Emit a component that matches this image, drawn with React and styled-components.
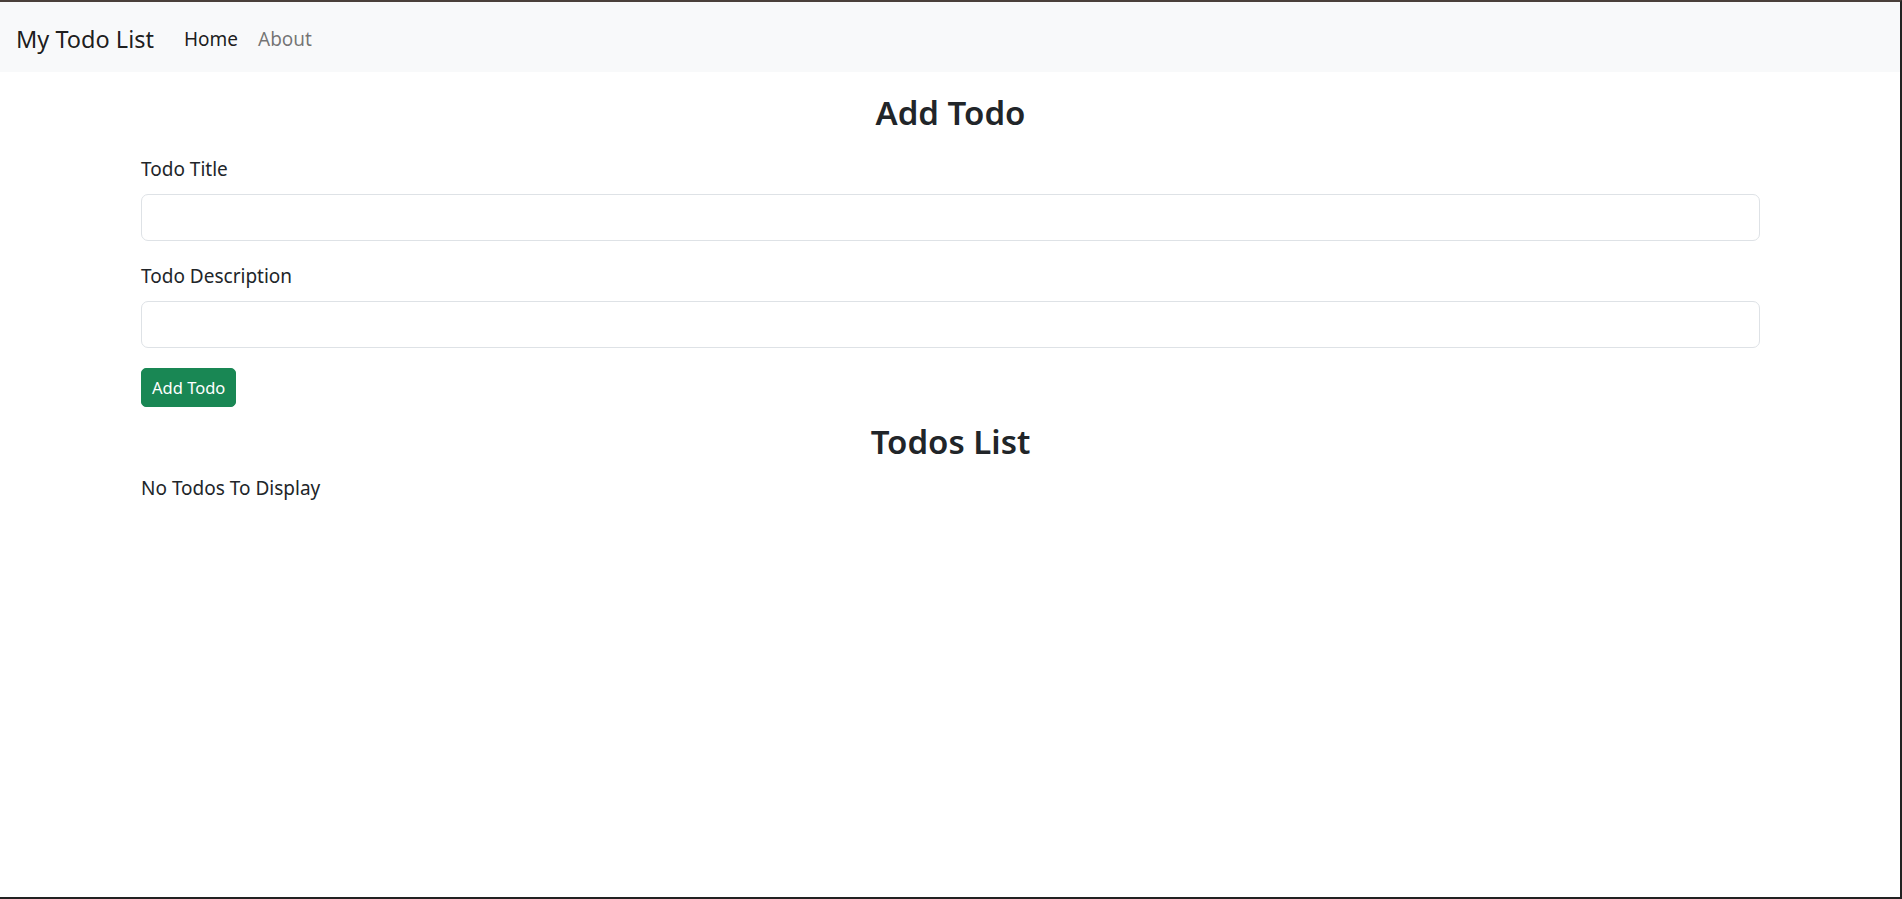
import React from "react";
import styled, { createGlobalStyle } from "styled-components";

const GlobalStyle = createGlobalStyle`
  * {
    box-sizing: border-box;
  }
  body {
    margin: 0;
    font-family: "Noto Sans", "Open Sans", sans-serif;
    font-size: 19px;
    line-height: 30px;
    color: #212529;
    background: #fff;
  }
`;

const Frame = styled.div`
  height: 899px;
  border-top: 2px solid #4a403a;
  border-right: 2px solid #222;
  border-bottom: 2px solid #222;
  overflow: hidden;
`;

const Navbar = styled.nav`
  height: 70px;
  background: #f8f9fa;
  display: flex;
  align-items: center;
  padding: 4px 15px 0 16px;
`;

const Brand = styled.a`
  font-size: 23.5px;
  color: rgba(0, 0, 0, 0.9);
  margin-right: 20px;
  text-decoration: none;
`;

const NavLink = styled.a`
  padding: 0 10px;
  font-size: 19px;
  color: ${(p) => (p.$active ? "rgba(0, 0, 0, 0.9)" : "rgba(0, 0, 0, 0.55)")};
  text-decoration: none;
`;

const Container = styled.main`
  width: 1650px;
  margin: 20px auto 0;
  padding: 0 15px 0 16px;
`;

const Heading = styled.h3`
  margin: ${(p) => (p.$top ? "14px 0 10px" : "1px 0 20px")};
  font-size: 33px;
  line-height: 42px;
  font-weight: 600;
  text-align: center;
`;

const Field = styled.div`
  margin-bottom: 20px;
`;

const Label = styled.label`
  display: block;
  margin-bottom: 10px;
`;

const Input = styled.input`
  display: block;
  width: 100%;
  height: 47px;
  padding: 7px 15px;
  font: inherit;
  border: 1px solid #dee2e6;
  border-radius: 7px;
  outline: none;
`;

const Button = styled.button`
  height: 39px;
  padding: 0 10px;
  font-family: inherit;
  font-size: 16.5px;
  color: #fff;
  background: #198754;
  border: 1px solid #198754;
  border-radius: 5px;
  cursor: pointer;
`;

const Empty = styled.p`
  margin: 0;
`;

export default function App() {
  return (
    <>
      <GlobalStyle />
      <Frame>
        <Navbar>
          <Brand href="#">My Todo List</Brand>
          <NavLink $active href="#">Home</NavLink>
          <NavLink href="#">About</NavLink>
        </Navbar>
        <Container>
          <Heading>Add Todo</Heading>
          <form onSubmit={(e) => e.preventDefault()}>
            <Field>
              <Label htmlFor="title">Todo Title</Label>
              <Input id="title" type="text" />
            </Field>
            <Field>
              <Label htmlFor="desc">Todo Description</Label>
              <Input id="desc" type="text" />
            </Field>
            <Button type="submit">Add Todo</Button>
          </form>
          <Heading $top>Todos List</Heading>
          <Empty>No Todos To Display</Empty>
        </Container>
      </Frame>
    </>
  );
}
